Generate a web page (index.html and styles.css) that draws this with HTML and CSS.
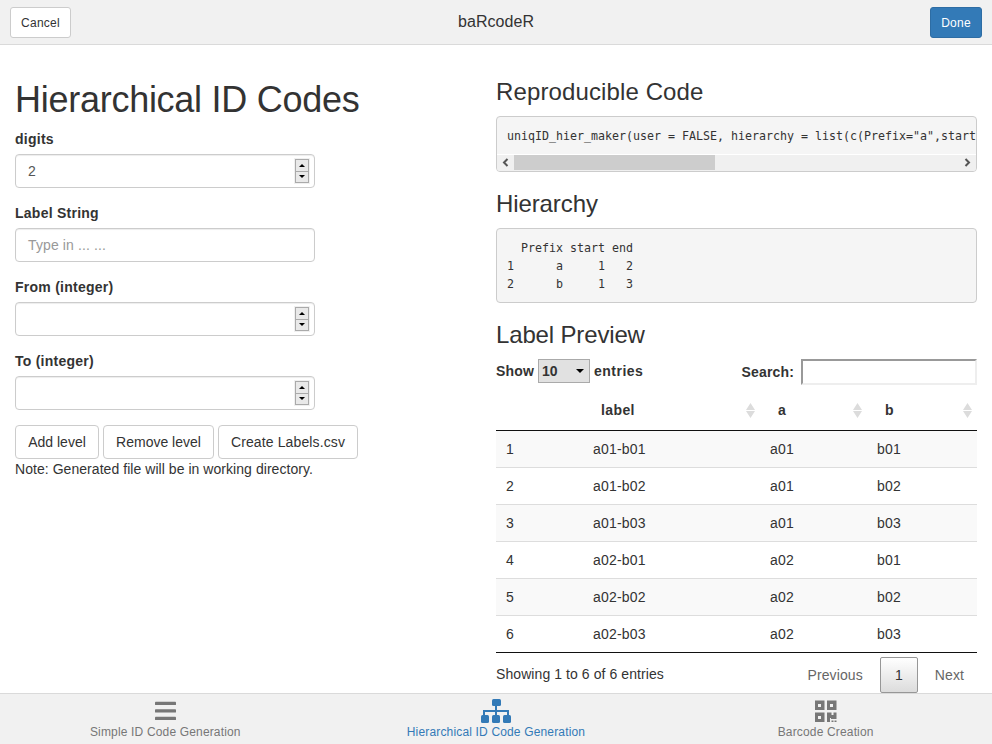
FILE: index.html
```html
<!DOCTYPE html>
<html lang="en">
<head>
<meta charset="utf-8">
<title>baRcodeR</title>
<link rel="stylesheet" href="styles.css">
</head>
<body>
<header class="titlebar">
  <button class="btn btn-sm">Cancel</button>
  <h1 class="app-title">baRcodeR</h1>
  <button class="btn btn-sm btn-primary">Done</button>
</header>
<main class="content">
  <section class="left">
    <h1 class="page-title">Hierarchical ID Codes</h1>
    <div class="field"><label>digits</label>
      <div class="control"><span class="value">2</span><span class="spinner"><i class="up"></i><i class="down"></i></span></div></div>
    <div class="field"><label>Label String</label>
      <div class="control"><span class="placeholder">Type in ... ...</span></div></div>
    <div class="field"><label>From (integer)</label>
      <div class="control"><span class="value"></span><span class="spinner"><i class="up"></i><i class="down"></i></span></div></div>
    <div class="field"><label>To (integer)</label>
      <div class="control"><span class="value"></span><span class="spinner"><i class="up"></i><i class="down"></i></span></div></div>
    <div class="actions">
      <button class="btn add">Add level</button>
      <button class="btn remove">Remove level</button>
      <button class="btn create">Create Labels.csv</button>
    </div>
    <p class="note">Note: Generated file will be in working directory.</p>
  </section>
  <section class="right">
    <h3 class="h-code">Reproducible Code</h3>
    <div class="code-box">
      <pre class="code">uniqID_hier_maker(user = FALSE, hierarchy = list(c(Prefix="a",start</pre>
      <div class="scrollbar">
        <svg class="arrow" viewBox="0 0 17 15"><path d="M10.500 4L7 7.500l3.500 3.500"/></svg>
        <span class="thumb"></span>
        <svg class="arrow end" viewBox="0 0 17 15"><path d="M6.500 4L10 7.500 6.500 11"/></svg>
      </div>
    </div>
    <h3 class="h-hier">Hierarchy</h3>
    <pre class="code hierarchy">  Prefix start end
1      a     1   2
2      b     1   3</pre>
    <h3 class="h-preview">Label Preview</h3>
    <div class="table-tools">
      <div class="length"><span class="show">Show</span><span class="select">10<i class="down"></i></span><span>entries</span></div>
      <div class="search"><span>Search:</span><span class="search-input"></span></div>
    </div>
    <table>
      <colgroup><col class="c-num"><col class="c-label"><col class="c-a"><col class="c-b"></colgroup>
      <thead><tr><th></th>
        <th><div class="th label-head">label<svg class="sort" viewBox="0 0 9 15"><path d="M4.500 0L9 7H0zM0 8h9L4.500 15z"/></svg></div></th>
        <th><div class="th">a<svg class="sort" viewBox="0 0 9 15"><path d="M4.500 0L9 7H0zM0 8h9L4.500 15z"/></svg></div></th>
        <th><div class="th">b<svg class="sort" viewBox="0 0 9 15"><path d="M4.500 0L9 7H0zM0 8h9L4.500 15z"/></svg></div></th></tr></thead>
      <tbody>
        <tr><td>1</td><td>a01-b01</td><td>a01</td><td>b01</td></tr>
        <tr><td>2</td><td>a01-b02</td><td>a01</td><td>b02</td></tr>
        <tr><td>3</td><td>a01-b03</td><td>a01</td><td>b03</td></tr>
        <tr><td>4</td><td>a02-b01</td><td>a02</td><td>b01</td></tr>
        <tr><td>5</td><td>a02-b02</td><td>a02</td><td>b02</td></tr>
        <tr><td>6</td><td>a02-b03</td><td>a02</td><td>b03</td></tr>
      </tbody>
    </table>
    <div class="table-foot">
      <span>Showing 1 to 6 of 6 entries</span>
      <div class="pager"><span class="page-link">Previous</span><span class="page-current">1</span><span class="page-link next">Next</span></div>
    </div>
  </section>
</main>
<nav class="tabs">
  <a class="tab"><svg width="21" height="24" viewBox="0 0 21 24"><g fill="currentColor"><rect x="0" y="2.700" width="21" height="3.400" rx=".7"/><rect x="0" y="10.200" width="21" height="3.400" rx=".7"/><rect x="0" y="17.700" width="21" height="3.400" rx=".7"/></g></svg><span>Simple ID Code Generation</span></a>
  <a class="tab active"><svg width="30" height="24" viewBox="0 0 30 24"><g fill="currentColor"><rect x="11" y="0" width="9" height="7" rx="1.500"/><path d="M14 7h2v4h12v5h-2v-3H16v3h-2v-3H4v3H2v-5h12z"/><rect x="0" y="16" width="8" height="8" rx="1.500"/><rect x="11" y="16" width="8" height="8" rx="1.500"/><rect x="22" y="16" width="8" height="8" rx="1.500"/></g></svg><span>Hierarchical ID Code Generation</span></a>
  <a class="tab barcode"><svg width="22" height="24" viewBox="0 0 22 24"><path fill="currentColor" fill-rule="evenodd" d="M0 1.500h9.500V11H0zM3 5v3h3V5zM12 1.500h9.500V11H12zM15 5v3h3V5zM0 13.500h9.500V23H0zM3 17v3h3v-3zM12 13.500h4.500V16h2v-2.500h3V20H16v-1h-1v4h-3zM16.500 21.500h2V23h-2zM19.500 21.500h2V23h-2z"/></svg><span>Barcode Creation</span></a>
</nav>
</body>
</html>
```
FILE: styles.css
```css
* { box-sizing: border-box; }
body {
  margin: 0;
  height: 744px;
  overflow: hidden;
  display: flex;
  flex-direction: column;
  background: #fff;
  color: #333;
  font: 14px/20px "Liberation Sans", Arial, sans-serif;
}
h1, h3, p, pre { margin: 0; font-weight: 400; }
.titlebar {
  height: 45px;
  flex: none;
  display: grid;
  grid-template-columns: 1fr auto 1fr;
  align-items: center;
  padding: 0 10px;
  background: #f1f1f1;
  border-bottom: 1px solid #dadada;
}
.titlebar .btn { justify-self: start; }
.titlebar .btn-primary { justify-self: end; }
.app-title { font-size: 16px; line-height: 20px; letter-spacing: .05px; }
.btn {
  height: 34px;
  padding: 0;
  border: 1px solid #ccc;
  border-radius: 4px;
  background: #fff;
  color: #333;
  font: inherit;
  white-space: nowrap;
}
.btn-sm { width: 61px; height: 31px; padding-top: 1px; font-size: 12px; letter-spacing: .25px; border-radius: 3px; }
.btn-primary { width: 52px; background: #337ab7; border-color: #2e6da4; color: #fff; }
.content { flex: 1; min-height: 0; display: flex; padding: 0 15px; }
.left { width: 481px; padding-top: 35px; }
.right { width: 481px; padding-top: 34px; }
.page-title { font-size: 36px; line-height: 40px; margin-bottom: 9px; letter-spacing: -.27px; }
.field { height: 74px; }
.field label { display: block; height: 25px; font-weight: 700; letter-spacing: .25px; }
.control {
  width: 300px;
  height: 34px;
  display: flex;
  align-items: center;
  justify-content: space-between;
  padding: 0 5px 0 12px;
  border: 1px solid #ccc;
  border-radius: 4px;
  box-shadow: inset 0 1px 1px rgba(0, 0, 0, .075);
  color: #555;
}
.placeholder { color: #999; letter-spacing: .12px; }
.spinner {
  width: 14px;
  height: 24px;
  display: grid;
  grid-template-rows: 11px 11px;
  border: 1px solid #aaa;
  background: linear-gradient(#aaa, #aaa) 0 11px / 100% 1px no-repeat #e9e9e9;
  box-shadow: 0 0 0 1px #f0f0f0;
}
.spinner i { align-self: center; justify-self: center; }
.up, .down { width: 0; height: 0; border: solid transparent; border-width: 0 3px; }
.up { border-bottom: 3px solid #000; }
.down { border-top: 3px solid #000; }
.actions { display: flex; gap: 4px; letter-spacing: .07px; }
.add { width: 84px; }
.remove { width: 111px; }
.create { width: 140px; letter-spacing: .12px; }
.note { letter-spacing: .05px; }
h3 { font-size: 24px; line-height: 26px; margin-bottom: 12px; }
.h-code { margin-bottom: 11px; letter-spacing: .12px; }
.code-box {
  height: 56px;
  overflow: hidden;
  border: 1px solid #ccc;
  border-radius: 4px;
  background: #f5f5f5;
}
.code { font: 11.63px/18px "DejaVu Sans Mono", monospace; }
.code-box .code { height: 37px; padding: 10px 0 0 10px; }
.scrollbar {
  height: 17px;
  display: flex;
  background: #f0f0f0;
  border-top: 1px solid #fff;
}
.arrow { width: 17px; height: 15px; fill: none; stroke: #555; stroke-width: 2; }
.arrow.end { margin-left: auto; }
.thumb { width: 201px; height: 15px; background: #cdcdcd; }
.h-hier { margin-top: 19px; margin-bottom: 11px; letter-spacing: -.1px; }
.hierarchy {
  height: 75px;
  padding: 10px;
  border: 1px solid #ccc;
  border-radius: 4px;
  background: #f5f5f5;
}
.h-preview { margin-top: 19px; margin-bottom: 11px; letter-spacing: -.15px; }
.table-tools {
  height: 31px;
  display: flex;
  justify-content: space-between;
  align-items: flex-start;
  font-weight: 700;
}
.length { display: flex; align-items: center; gap: 4px; letter-spacing: .5px; }
.show { width: 38px; letter-spacing: .2px; }
.select {
  width: 52px;
  height: 24px;
  display: flex;
  align-items: center;
  justify-content: space-between;
  padding: 0 5px 0 3px;
  border: 1px solid #aaa;
  background: #e1e1e1;
  letter-spacing: 0;
}
.select .down { border-width: 4px 4px 0; }
.search { display: flex; align-items: center; gap: 7px; letter-spacing: .15px; }
.search-input { width: 176px; height: 26px; border: 2px solid; border-color: #999 #eee #eee #999; }
table { width: 481px; table-layout: fixed; border-collapse: separate; border-spacing: 0; }
.c-num { width: 87px; }
.c-label { width: 177px; }
.c-a { width: 107px; }
.c-b { width: 110px; }
th { height: 41px; padding: 0 5px 0 18px; border-bottom: 1px solid #111; text-align: left; }
.th { display: flex; align-items: center; justify-content: space-between; }
.label-head { letter-spacing: .4px; }
.sort { width: 9px; height: 15px; fill: #dcdcdc; }
td { height: 37px; padding: 0 10px; border-bottom: 1px solid #ddd; letter-spacing: .2px; }
tbody tr:nth-child(odd) { background: #f9f9f9; }
tbody tr:last-child td { border-bottom-color: #111; }
.table-foot { display: flex; justify-content: space-between; padding-top: 4px; }
.table-foot > span { padding-top: 7px; letter-spacing: .08px; }
.pager { display: flex; align-items: center; color: #666; }
.page-link { padding: 0 17px; letter-spacing: .1px; }
.page-link.next { padding-right: 13px; }
.page-current {
  width: 38px;
  height: 36px;
  display: grid;
  place-items: center;
  border: 1px solid #979797;
  border-radius: 2px;
  background: linear-gradient(#fff, #dcdcdc);
  color: #333;
}
.tabs {
  height: 51px;
  flex: none;
  display: grid;
  grid-template-columns: repeat(3, 1fr);
  background: #f1f1f1;
  border-top: 1px solid #dadada;
}
.tab { display: flex; flex-direction: column; align-items: center; padding-top: 5px; color: #777; font-size: 12px; line-height: 16px; letter-spacing: .16px; }
.tab.active { color: #337ab7; }
.tab.barcode { padding-right: 2px; }
.tab svg { display: block; }
.tab span { padding-top: 1px; }
```
